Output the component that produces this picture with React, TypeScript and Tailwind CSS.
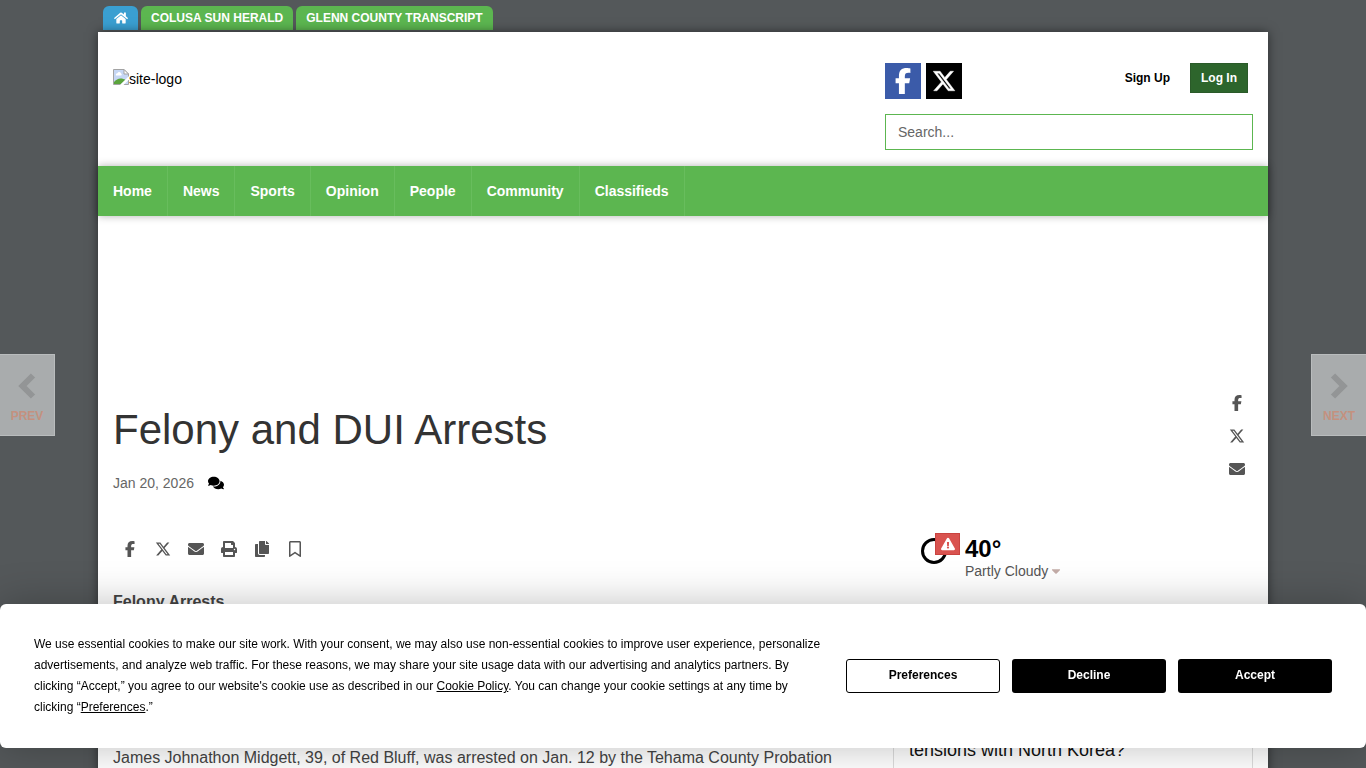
import { FaFacebookF, FaXTwitter, FaRegBookmark } from 'react-icons/fa6';
import { FaHome, FaEnvelope, FaPrint, FaCopy, FaComments, FaExclamationTriangle, FaCaretDown } from 'react-icons/fa';

const sites = ['COLUSA SUN HERALD', 'GLENN COUNTY TRANSCRIPT'];

const navItems = ['Home', 'News', 'Sports', 'Opinion', 'People', 'Community', 'Classifieds'];

const shareLinks = [
    { label: 'Facebook', Icon: FaFacebookF },
    { label: 'X', Icon: FaXTwitter },
    { label: 'Email', Icon: FaEnvelope },
    { label: 'Print', Icon: FaPrint },
    { label: 'Copy article link', Icon: FaCopy },
    { label: 'Save', Icon: FaRegBookmark },
];

function SiteTabs() {
    return (
        <div className="flex h-8 shrink-0 items-start gap-[3px] px-[5px] pt-1.5 text-xs font-bold text-white">
            <a href="#" aria-label="Home" className="flex h-6 w-[35px] items-center justify-center rounded-t-md bg-[#3a9fd1]">
                <FaHome className="h-3.5 w-3.5" />
            </a>
            {sites.map((site) => (
                <a key={site} href="#" className="flex h-6 items-center rounded-t-md bg-[#5cb650] px-2.5">
                    {site}
                </a>
            ))}
        </div>
    );
}

// Placeholder for a logo that has not loaded
function SiteLogo() {
    return (
        <a href="#" className="mt-1.5 flex text-sm text-black">
            <svg viewBox="0 0 16 16" className="h-4 w-4" aria-hidden="true">
                <path d="M.5 .5h10.5l4.5 4.5v10.5h-15z" fill="#c6d7f5" stroke="#a3a3a3" />
                <path d="M11 .5v4.5h4.5z" fill="#fff" stroke="#a3a3a3" />
                <path d="M3 6.5a1.6 1.6 0 0 1 1.4-2.3a2 2 0 0 1 3.7.3a1.3 1.3 0 0 1 .2 2z" fill="#fff" />
                <path d="M1 15v-2c2-2 4-3.500 6.500-3.500c2 0 3.500.5 5 1.500L8 15z" fill="#5ba43c" />
                <path d="M16 7L7 16h3.500L16 10.500z" fill="#fff" />
            </svg>
            <span>site-logo</span>
        </a>
    );
}

function Header() {
    return (
        <header className="flex h-[134px] justify-between px-[15px] pt-[31px]">
            <SiteLogo />
            <div className="flex w-[368px] flex-col gap-[15px]">
                <div className="flex items-start justify-between">
                    <div className="flex gap-[5px] text-white">
                        <a href="#" aria-label="Facebook" className="flex h-9 w-9 items-center justify-center bg-[#3b5ba9]">
                            <FaFacebookF className="h-[26px] w-[26px]" />
                        </a>
                        <a href="#" aria-label="X" className="flex h-9 w-9 items-center justify-center bg-black">
                            <FaXTwitter className="h-6 w-6" stroke="currentColor" strokeWidth={10} />
                        </a>
                    </div>
                    <div className="flex items-center gap-5 pr-[5px] text-xs font-bold">
                        <a href="#" className="text-black">Sign Up</a>
                        <a href="#" className="flex h-[30px] items-center border border-[#2a5a29] bg-[#2d652c] px-2.5 text-white">
                            Log In
                        </a>
                    </div>
                </div>
                <input
                    type="search"
                    aria-label="Search"
                    placeholder="Search..."
                    className="h-9 w-full border border-[#5cb650] px-3 text-sm text-[#555] outline-none placeholder:text-[#666]"
                />
            </div>
        </header>
    );
}

function ArrowLink({ label, side }: { label: string; side: 'left' | 'right' }) {
    return (
        <a
            href="#"
            className={`fixed top-[354px] flex h-[82px] w-[55px] flex-col items-center gap-2 border border-[#b9bcbd] bg-[#a9acad] pt-[17px] text-xs font-bold text-[#c4917f] ${
                side === 'left' ? 'left-0 border-l-0' : 'right-0 border-r-0'
            }`}
        >
            <svg viewBox="0 0 28 28" className="h-7 w-7" fill="none" stroke="#939596" strokeWidth="6" aria-hidden="true">
                <path d={side === 'left' ? 'M20 3.500L9.500 14L20 24.500' : 'M8 3.500L18.500 14L8 24.500'} />
            </svg>
            <span className="leading-4">{label}</span>
        </a>
    );
}

function Weather() {
    return (
        <div className="flex gap-[5px] pl-7">
            <div className="relative h-8 w-[39px]">
                <svg viewBox="0 0 26 26" className="mt-[5px] h-[26px] w-[26px]" aria-hidden="true">
                    <circle cx="13" cy="13" r="11.500" fill="none" stroke="#000" strokeWidth="3" />
                </svg>
                <span className="absolute right-0 top-0 flex h-[22px] w-[25px] items-center justify-center border border-[#c9433f] bg-[#d9534f] text-white">
                    <FaExclamationTriangle className="h-3.5 w-3.5" />
                </span>
            </div>
            <div>
                <div className="text-2xl leading-8 font-bold text-black">40°</div>
                <button className="flex h-3 items-center gap-0.5 text-sm text-[#555]">
                    Partly Cloudy <FaCaretDown className="h-3.5 w-3 text-[#c4ada8]" />
                </button>
            </div>
        </div>
    );
}

function CookieBanner() {
    return (
        <div
            role="dialog"
            aria-label="Cookie consent"
            className="fixed inset-x-0 bottom-5 flex items-center gap-6 rounded-md bg-white px-[34px] py-[30px] text-xs text-black shadow-[0_0_40px_rgba(0,0,0,0.25)]"
        >
            <p className="flex-1 leading-[21px]">
                We use essential cookies to make our site work. With your consent, we may also use non-essential cookies to
                improve user experience, personalize advertisements, and analyze web traffic. For these reasons, we may share
                your site usage data with our advertising and analytics partners. By clicking “Accept,” you agree to our
                website's cookie use as described in our <a href="#" className="underline">Cookie Policy</a>. You can change
                your cookie settings at any time by clicking “<a href="#" className="underline">Preferences</a>.”
            </p>
            <div className="flex gap-3 font-bold">
                <button className="h-[34px] w-[154px] rounded-[3px] border border-black bg-white pb-0.5">Preferences</button>
                <button className="h-[34px] w-[154px] rounded-[3px] bg-black pb-0.5 text-white">Decline</button>
                <button className="h-[34px] w-[154px] rounded-[3px] bg-black pb-0.5 text-white">Accept</button>
            </div>
        </div>
    );
}

function App() {
    return (
        <div className="h-screen overflow-hidden bg-[#54585a] font-['Liberation_Sans',Arial,sans-serif]">
            <div className="mx-auto flex h-full max-w-[1170px] flex-col">
                <SiteTabs />
                <div className="flex-1 bg-white shadow-[0_0_10px_rgba(0,0,0,0.5)]">
                    <Header />
                    <nav className="flex h-[50px] bg-[#5cb650] text-sm font-bold text-white shadow-[0_0_8px_rgba(0,0,0,0.3)]">
                        {navItems.map((item) => (
                            <a key={item} href="#" className="flex items-center border-r border-[#68bd5d] px-[15px]">
                                {item}
                            </a>
                        ))}
                    </nav>

                    <main className="px-[15px] pt-[178px]">
                        <div className="flex justify-between">
                            <div className="pt-[13px]">
                                <h1 className="text-[42px] leading-[46px] text-[#333]">Felony and DUI Arrests</h1>
                                <div className="mt-5 flex items-center gap-3.5 text-sm text-[#666]">
                                    <time dateTime="2026-01-20">Jan 20, 2026</time>
                                    <a href="#" aria-label="Comments" className="text-black">
                                        <FaComments className="h-4 w-4" />
                                    </a>
                                </div>
                            </div>
                            <div className="flex flex-col gap-[17px] px-2 pt-px text-[#555]">
                                {shareLinks.slice(0, 3).map(({ label, Icon }) => (
                                    <a key={label} href="#" aria-label={label}>
                                        <Icon className="h-4 w-4" />
                                    </a>
                                ))}
                            </div>
                        </div>

                        <div className="mt-10 flex justify-between gap-[30px]">
                            <article className="flex-1 text-base text-[#444]">
                                <div className="flex gap-[17px] px-[9px] pt-2 text-[#555]">
                                    {shareLinks.map(({ label, Icon }) => (
                                        <a key={label} href="#" aria-label={label}>
                                            <Icon className="h-4 w-4" />
                                        </a>
                                    ))}
                                </div>
                                <h2 className="mt-[33px] font-bold">Felony Arrests</h2>
                                <p className="mt-[132px]">
                                    James Johnathon Midgett, 39, of Red Bluff, was arrested on Jan. 12 by the Tehama County Probation
                                </p>
                            </article>
                            <aside className="w-[360px]">
                                <Weather />
                                <div className="mt-36 border border-[#ddd] px-[15px] pt-4 pb-20 text-lg text-[#111]">
                                    <p className="leading-6">tensions with North Korea?</p>
                                </div>
                            </aside>
                        </div>
                    </main>
                </div>
            </div>

            <ArrowLink label="PREV" side="left" />
            <ArrowLink label="NEXT" side="right" />
            <CookieBanner />
        </div>
    );
}

export default App;
